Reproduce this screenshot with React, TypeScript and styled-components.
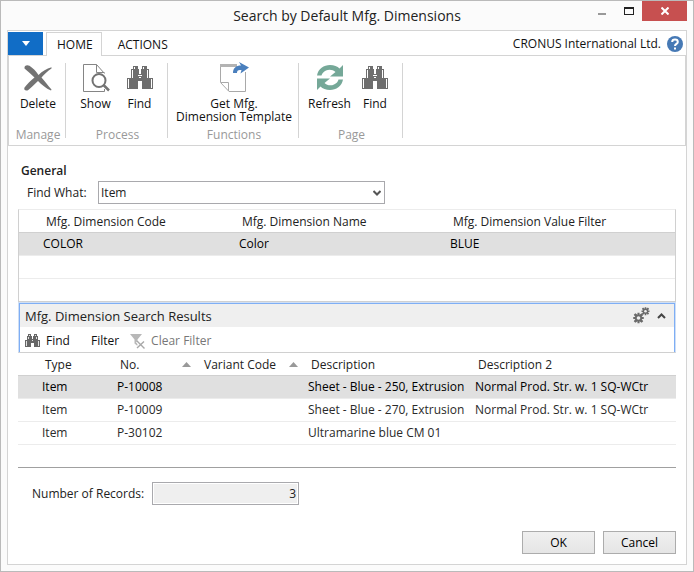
import React from 'react';
import styled, { createGlobalStyle, css } from 'styled-components';

const GlobalStyle = createGlobalStyle`
  *, *::before, *::after { box-sizing: border-box; }
  body {
    margin: 0;
    background: #fbfbfb;
    color: #222;
    font-family: "Open Sans", "Noto Sans", sans-serif;
    font-size: 12px;
    line-height: 16px;
  }
  button, input, select { font: inherit; color: inherit; margin: 0; }
`;

/* ---------- window ---------- */

const Window = styled.div`
  display: flex;
  flex-direction: column;
  min-height: 100vh;
  border: 1px solid #bababa;
  background: #fbfbfb;
`;

const TitleBar = styled.header`
  display: grid;
  grid-template-columns: 1fr auto 1fr;
  height: 29px;
  padding-right: 6px;
`;

const Title = styled.h1`
  grid-column: 2;
  margin: 0;
  padding-left: 6px;
  font-size: 14px;
  font-weight: 400;
  line-height: 30px;
  white-space: nowrap;
`;

const WindowControls = styled.div`
  display: flex;
  justify-self: end;
  height: 20px;
`;

const WindowButton = styled.button<{ $close?: boolean }>`
  display: flex;
  align-items: center;
  justify-content: center;
  width: ${(p) => (p.$close ? 45 : 27)}px;
  height: 20px;
  padding: 0;
  border: 0;
  background: ${(p) => (p.$close ? '#c75050' : 'transparent')};
`;

const Frame = styled.main`
  display: flex;
  flex: 1;
  flex-direction: column;
  margin: 0 6px 6px;
  border: 1px solid #d4d4d4;
  background: #fff;
`;

/* ---------- ribbon ---------- */

const TabRow = styled.div`
  display: flex;
  height: 24px;
  padding-top: 1px;
  color: #111;
`;

const FileTab = styled.button`
  display: flex;
  align-items: center;
  justify-content: center;
  width: 35px;
  height: 23px;
  margin-right: 3px;
  padding: 0;
  border: 0;
  background: #116dc6;
`;

const Tab = styled.button<{ $active?: boolean }>`
  height: 24px;
  padding: 0 8px 0 10px;
  border: 1px solid transparent;
  border-bottom: 0;
  background: none;
  line-height: 24px;
  ${(p) =>
    p.$active &&
    css`
      z-index: 1;
      margin-right: 5px;
      border-color: #d4d4d4;
      background: #fff;
    `}
`;

const Company = styled.div`
  display: flex;
  align-items: center;
  gap: 6px;
  margin-left: auto;
  padding-right: 3px;
`;

const HelpButton = styled.button`
  display: flex;
  padding: 0;
  border: 0;
  background: none;
`;

const Ribbon = styled.div`
  display: flex;
  height: 91px;
  padding: 7px 0;
  border: 1px solid #d4d4d4;
`;

const Group = styled.section<{ $width: number }>`
  display: flex;
  flex-direction: column;
  justify-content: space-between;
  width: ${(p) => p.$width}px;
  padding: 1px 0 0 2px;
  border-right: 1px solid #d4d4d4;
`;

const GroupItems = styled.div`
  display: flex;
  justify-content: center;
  gap: 4px;
`;

const GroupLabel = styled.h2`
  height: 11px;
  margin: 0;
  color: #999;
  font-size: 12px;
  font-weight: 400;
  line-height: 16px;
  text-align: center;
`;

const RibbonButton = styled.button`
  display: flex;
  flex-direction: column;
  align-items: center;
  gap: 5px;
  min-width: 40px;
  padding: 0;
  border: 0;
  background: none;
  color: #111;
  line-height: 13px;
  white-space: nowrap;
  svg { overflow: visible; }
`;

/* ---------- content ---------- */

const Content = styled.div`
  display: flex;
  flex: 1;
  flex-direction: column;
  padding: 17px 10px 10px;
`;

const SectionTitle = styled.h2`
  margin: 0 0 2px;
  padding-left: 3px;
  font-size: 12px;
  font-weight: 600;
`;

const Field = styled.div<{ $indent: number; $label: number }>`
  display: grid;
  grid-template-columns: ${(p) => p.$label}px auto;
  justify-content: start;
  align-items: center;
  padding-left: ${(p) => p.$indent}px;
`;

const SelectBox = styled.div`
  display: grid;
  width: 287px;
  height: 23px;
  svg, select { grid-area: 1 / 1; }
  svg { align-self: center; justify-self: end; margin-right: 4px; pointer-events: none; }
`;

const Select = styled.select`
  appearance: none;
  width: 100%;
  height: 23px;
  padding: 0 20px 0 2px;
  border: 1px solid #a9a9ad;
  border-radius: 0;
  background: #fff;
`;

const GridBox = styled.div`
  height: 93px;
  margin-top: 5px;
  border: 1px solid #d0d0d0;
  border-top-color: #ececec;
`;

const Table = styled.table`
  width: 100%;
  border-spacing: 0;
  table-layout: fixed;
`;

const Col = styled.col<{ $width?: number }>`
  width: ${(p) => (p.$width ? `${p.$width}px` : 'auto')};
`;

const Row = styled.tr<{ $selected?: boolean }>`
  background: ${(p) => (p.$selected ? '#e0e0e0' : 'transparent')};
  color: ${(p) => (p.$selected ? '#000' : '#2a2a2a')};
`;

const Th = styled.th`
  height: 23px;
  padding: 2px 0 0 6px;
  border-bottom: 1px solid #d0d0d0;
  font-weight: 400;
  line-height: 16px;
  text-align: left;
  white-space: nowrap;
  &:first-child { padding-left: 27px; }
`;

const ThContent = styled.div`
  display: flex;
  align-items: center;
  justify-content: space-between;
  padding-right: 7px;
  svg { margin-bottom: 2px; }
`;

const Td = styled.td`
  height: 23px;
  padding: 0 0 0 3px;
  border-bottom: 1px solid #ececec;
  line-height: 16px;
  white-space: nowrap;
  &:first-child { padding-left: 24px; }
`;

const Results = styled.section`
  border: 1px solid #cfdff5;
  border-bottom-color: #d0d0d0;
`;

const ResultsInner = styled.div`
  border: 1px solid #7eaef5;
  border-bottom: 0;
`;

const ResultsHeader = styled.header`
  display: flex;
  align-items: center;
  gap: 7px;
  height: 23px;
  padding: 0 8px 0 5px;
  background: #efefef;
`;

const ResultsTitle = styled.h2`
  flex: 1;
  margin: 0;
  font-size: 13px;
  font-weight: 400;
`;

const IconButton = styled.button`
  display: flex;
  padding: 0;
  border: 0;
  background: none;
`;

const Toolbar = styled.div`
  display: flex;
  height: 25px;
  padding-left: 5px;
`;

const ToolButton = styled.button<{ $gap: number }>`
  display: flex;
  align-items: center;
  gap: 6px;
  margin-right: ${(p) => p.$gap}px;
  padding: 3px 0 0;
  border: 0;
  background: none;
  color: #111;
  line-height: 16px;
  &:disabled { color: #777; }
`;

const ResultsBody = styled.div`
  min-height: 115px;
  border-bottom: 1px solid #a0a0a0;
  margin-bottom: 14px;
`;

const CountInput = styled.input`
  width: 147px;
  height: 23px;
  padding: 0 2px;
  border: 1px solid #a9a9ad;
  background: #efefef;
  box-shadow: inset 0 0 0 1px #fff;
  outline: 0;
  text-align: right;
`;

const Footer = styled.footer`
  display: flex;
  justify-content: flex-end;
  gap: 8px;
  margin-top: auto;
`;

const DialogButton = styled.button`
  width: 73px;
  height: 23px;
  padding: 0;
  border: 1px solid #acacac;
  background: linear-gradient(#f0f0f0, #e5e5e5);
  color: #000;
`;

/* ---------- icons ---------- */

const DeleteIcon = () => (
  <svg width="30" height="28" viewBox="0 0 30 28" fill="#737373">
    <path d="M1.5 4.5C1 1.500 4 .5 6.500 1.800C10 4 13 7.500 15.500 11C19.500 7 23.500 4.500 28.500 3.200V4.500C24.500 7 21.500 10 18.500 13.500C21.500 17 25 21.500 28.500 25.500L28 26.500C23 24.500 18.500 20.500 15 17C11.500 20 8 24 5 26.200C2.500 27.500 .5 25.500 1.500 23.500C4 20 8 16.500 11.500 13.500C8.500 10.500 5 7.500 1.500 4.500Z" />
  </svg>
);

const ShowIcon = () => (
  <svg width="28" height="28" viewBox="0 0 28 28" fill="none" stroke="#858585">
    <path d="M22.500 9.500L14.500 .5H1.500V27.500H22.500V25M14.500 .5V8.500H22.500" />
    <circle cx="17" cy="16.500" r="6.500" fill="#fff" stroke="#737373" strokeWidth="2" />
    <path d="M21.500 21L27 26.500" stroke="#737373" strokeWidth="2.500" />
  </svg>
);

const FindIcon = ({ width = 26, height = 28, view = '0 0 26 28' }: { width?: number; height?: number; view?: string }) => (
  <svg width={width} height={height} viewBox={view} fill="#6e6e6e">
    <path d="M6 2h5v3h1v5h2V5h1V2h5v3h2v9h4v11H15v-8h-4v8H0V14h4V5h2z" />
    <path d="M7 3h1v2H7zM16 3h1v2h-1zM5 6h1v8H5zM20 6h1v8h-1zM1 15h1v9H1zM24 15h1v9h-1zM11 11h4v1h-4zM12 13h2v1h-2z" fill="#fff" />
  </svg>
);

const SmallFindIcon = () => (
  <svg width="15" height="14" viewBox="0 0 15 14" fill="#666">
    <path d="M3 0h3v2h1v3h1V2h1V0h3v2h1v4h2v7H9V9H6v4H0V6h2V2h1z" />
    <path d="M4 1h1v1H4zM10 1h1v1h-1zM3 3h1v2H3zM11 3h1v2h-1zM1 7h1v5H1zM13 7h1v5h-1zM7 6h1v1H7z" fill="#fff" fillOpacity=".8" />
  </svg>
);

const TemplateIcon = () => (
  <svg width="30" height="28" viewBox="0 2 30 28" fill="none">
    <path d="M1.500 3V20.500L10 29.500H26.500V10M2 20.500H9.500V29" stroke="#a9a9a9" />
    <path d="M1 2H18V5H1Z" fill="#b3b3b3" />
    <path d="M20 0L30 5.500L21.500 11.500L22.500 8C19 7.500 18 8.500 18 11H14C14 6 17 3.500 22 3.500Z" fill="#4a7fbd" />
  </svg>
);

const RefreshIcon = () => (
  <svg width="28" height="28" viewBox="0 0 28 28">
    <g fill="#75a898">
      <path d="M1 11.500C2 5 8 1 14 1C18 1 21.500 2.500 23.500 4.500L27 1V12.500H14L19.500 8C17 5.500 13 5 10 6.500C7.500 7.500 6 9.500 5.500 11.500Z" />
      <path d="M27 15.500C26 22 20 26 14 26C10 26 6.500 24.500 4.500 22.500L1 26V14.500H14L8.500 19C11 21.500 15 22 18 20.500C20.500 19.500 22 17.500 22.500 15.500Z" />
    </g>
  </svg>
);

const HelpIcon = () => (
  <svg width="16" height="16" viewBox="0 0 16 16">
    <circle cx="8" cy="8" r="8" fill="#4679b5" />
    <path d="M5.200 6C5.200 2.800 10.800 2.800 10.800 6C10.800 8 8 7.800 8 10" fill="none" stroke="#fff" strokeWidth="2" />
    <path d="M7 11.500h2v2H7z" fill="#fff" />
  </svg>
);

const GEAR = 'M-1-5H1V-3L3-4.500L4.500-3L3-1H5V1H3L4.500 3L3 4.500L1 3V5H-1V3L-3 4.500L-4.500 3L-3 1H-5V-1H-3L-4.500-3L-3-4.500L-1-3Z';

const GearsIcon = () => (
  <svg width="17" height="17" viewBox="0 0 17 17" fill="#6a6a6a">
    <path d={GEAR} transform="translate(5.500 11) scale(1.050)" />
    <path d={GEAR} transform="translate(12.500 4.200) scale(.8)" />
    <circle cx="5.500" cy="11" r="1.800" fill="#efefef" />
    <circle cx="12.500" cy="4.200" r="1.300" fill="#efefef" />
  </svg>
);

const ClearFilterIcon = () => (
  <svg width="15" height="15" viewBox="0 0 15 15">
    <path d="M0 0H12L7.500 5.500V12L4.500 9.500V5.500Z" fill="#b8b8b8" />
    <path d="M7 7.500L14 14M14 7.500L7 14" stroke="#fff" strokeWidth="3" />
    <path d="M7 7L14.500 14.500M14 7.500L7 14" stroke="#a8a8a8" strokeWidth="1.400" />
  </svg>
);

const SortIcon = () => (
  <svg width="9" height="5" viewBox="0 0 9 5" fill="#999">
    <path d="M4.500 0L9 5H0Z" />
  </svg>
);

/* ---------- data ---------- */

const dimensions = [
  ['COLOR', 'Color', 'BLUE'],
  ['', '', ''],
];

const results = [
  ['Item', 'P-10008', '', 'Sheet - Blue - 250, Extrusion', 'Normal Prod. Str. w. 1 SQ-WCtr'],
  ['Item', 'P-10009', '', 'Sheet - Blue - 270, Extrusion', 'Normal Prod. Str. w. 1 SQ-WCtr'],
  ['Item', 'P-30102', '', 'Ultramarine blue CM 01', ''],
];

const Rows = ({ rows }: { rows: string[][] }) => (
  <tbody>
    {rows.map((row, i) => (
      <Row key={i} $selected={i === 0}>
        {row.map((cell, j) => (
          <Td key={j}>{cell}</Td>
        ))}
      </Row>
    ))}
  </tbody>
);

export default function App() {
  return (
    <>
      <GlobalStyle />
      <Window>
        <TitleBar>
          <Title>Search by Default Mfg. Dimensions</Title>
          <WindowControls>
            <WindowButton aria-label="Minimize">
              <svg width="8" height="10" viewBox="0 0 8 10"><path d="M0 7h8v2H0z" fill="#999" /></svg>
            </WindowButton>
            <WindowButton aria-label="Maximize">
              <svg width="10" height="8" viewBox="0 0 10 8"><path d="M0 0h10v8H0zM1 2v5h8V2z" fill="#222" fillRule="evenodd" /></svg>
            </WindowButton>
            <WindowButton $close aria-label="Close">
              <svg width="8" height="8" viewBox="0 0 8 8"><path d="M.5 .5L7.500 7.500M7.500 .5L.5 7.500" stroke="#fff" strokeWidth="2" /></svg>
            </WindowButton>
          </WindowControls>
        </TitleBar>

        <Frame>
          <TabRow>
            <FileTab aria-label="Application menu">
              <svg width="8" height="5" viewBox="0 0 8 5"><path d="M0 0h8L4 5z" fill="#fff" /></svg>
            </FileTab>
            <Tab $active>HOME</Tab>
            <Tab>ACTIONS</Tab>
            <Company>
              CRONUS International Ltd.
              <HelpButton aria-label="Help"><HelpIcon /></HelpButton>
            </Company>
          </TabRow>

          <Ribbon>
            <Group $width={57}>
              <GroupItems>
                <RibbonButton><DeleteIcon />Delete</RibbonButton>
              </GroupItems>
              <GroupLabel>Manage</GroupLabel>
            </Group>
            <Group $width={102}>
              <GroupItems>
                <RibbonButton><ShowIcon />Show</RibbonButton>
                <RibbonButton><FindIcon />Find</RibbonButton>
              </GroupItems>
              <GroupLabel>Process</GroupLabel>
            </Group>
            <Group $width={131}>
              <GroupItems>
                <RibbonButton><TemplateIcon /><span>Get Mfg.<br />Dimension Template</span></RibbonButton>
              </GroupItems>
              <GroupLabel>Functions</GroupLabel>
            </Group>
            <Group $width={104}>
              <GroupItems>
                <RibbonButton><RefreshIcon />Refresh</RibbonButton>
                <RibbonButton><FindIcon />Find</RibbonButton>
              </GroupItems>
              <GroupLabel>Page</GroupLabel>
            </Group>
          </Ribbon>

          <Content>
            <SectionTitle>General</SectionTitle>
            <Field $indent={9} $label={71}>
              <label htmlFor="find-what">Find What:</label>
              <SelectBox>
                <Select id="find-what" defaultValue="Item">
                  <option>Item</option>
                </Select>
                <svg width="8" height="6" viewBox="0 0 8 6"><path d="M.5 1L4 4.500L7.500 1" fill="none" stroke="#555" strokeWidth="2" /></svg>
              </SelectBox>
            </Field>

            <GridBox>
              <Table>
                <colgroup><Col $width={217} /><Col $width={211} /><Col /></colgroup>
                <thead>
                  <tr>
                    <Th>Mfg. Dimension Code</Th>
                    <Th>Mfg. Dimension Name</Th>
                    <Th>Mfg. Dimension Value Filter</Th>
                  </tr>
                </thead>
                <Rows rows={dimensions} />
              </Table>
            </GridBox>

            <Results>
              <ResultsInner>
                <ResultsHeader>
                  <ResultsTitle>Mfg. Dimension Search Results</ResultsTitle>
                  <IconButton aria-label="Customize"><GearsIcon /></IconButton>
                  <IconButton aria-label="Collapse">
                    <svg width="9" height="6" viewBox="0 0 9 6"><path d="M1 5L4.500 1.500L8 5" fill="none" stroke="#444" strokeWidth="2" /></svg>
                  </IconButton>
                </ResultsHeader>
                <Toolbar>
                  <ToolButton $gap={21}><SmallFindIcon />Find</ToolButton>
                  <ToolButton $gap={11}>Filter</ToolButton>
                  <ToolButton $gap={0} disabled><ClearFilterIcon />Clear Filter</ToolButton>
                </Toolbar>
              </ResultsInner>
            </Results>

            <ResultsBody>
              <Table>
                <colgroup><Col $width={96} /><Col $width={84} /><Col $width={107} /><Col $width={167} /><Col /></colgroup>
                <thead>
                  <tr>
                    <Th>Type</Th>
                    <Th><ThContent>No.<SortIcon /></ThContent></Th>
                    <Th><ThContent>Variant Code<SortIcon /></ThContent></Th>
                    <Th>Description</Th>
                    <Th>Description 2</Th>
                  </tr>
                </thead>
                <Rows rows={results} />
              </Table>
            </ResultsBody>

            <Field $indent={14} $label={120}>
              <label htmlFor="record-count">Number of Records:</label>
              <CountInput id="record-count" value="3" readOnly />
            </Field>

            <Footer>
              <DialogButton>OK</DialogButton>
              <DialogButton>Cancel</DialogButton>
            </Footer>
          </Content>
        </Frame>
      </Window>
    </>
  );
}
